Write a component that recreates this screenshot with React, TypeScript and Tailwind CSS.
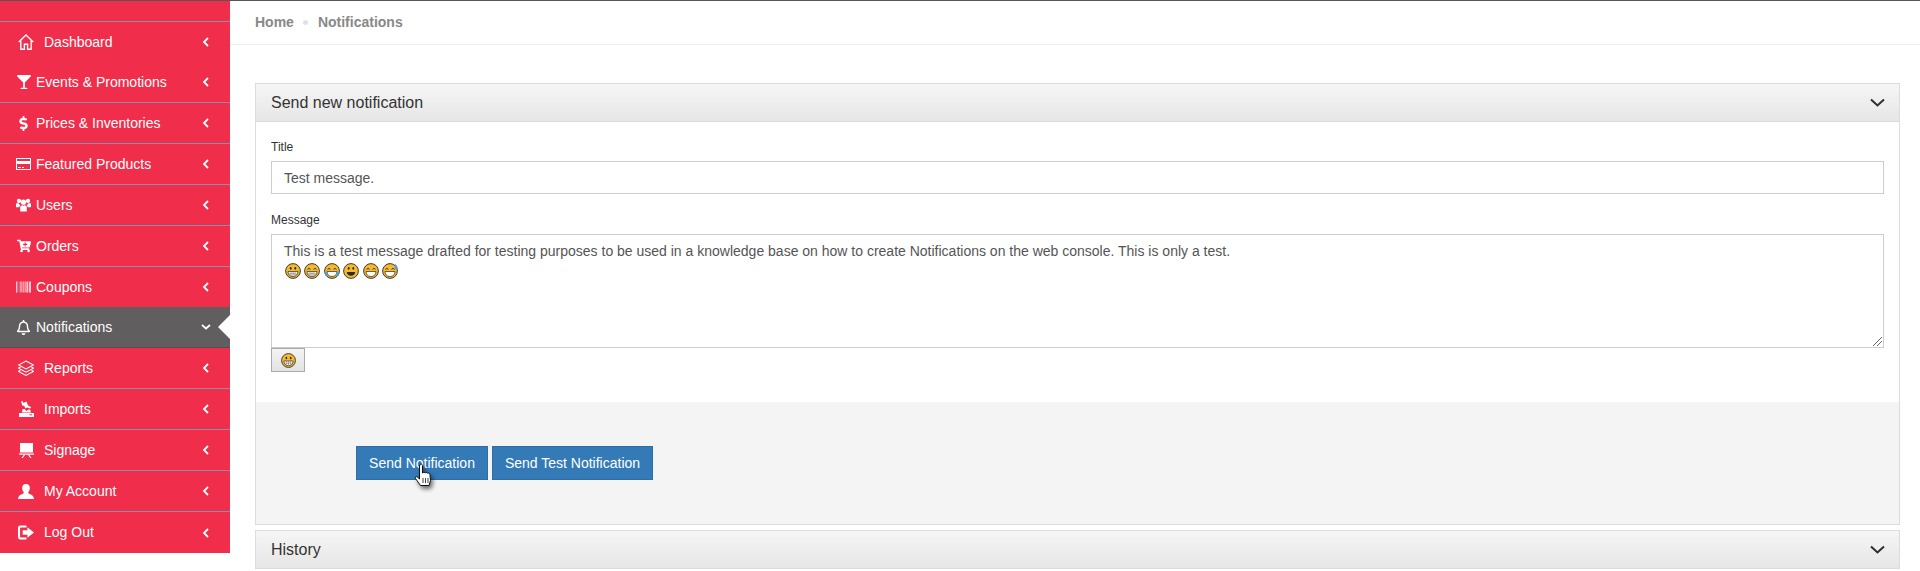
import type { ReactNode } from "react";
import { FaGlassMartini, FaDollarSign, FaCartPlus, FaBarcode, FaRegBell } from "react-icons/fa";

const HomeIcon = () => (
  <svg width="16" height="16" viewBox="0 0 16 16" fill="none" stroke="currentColor" strokeWidth="1.400">
    <path d="M.8 8 8 1l7.200 7" />
    <path d="M2.800 6.500v8.700h3.600v-5h3.200v5h3.600V6.500" />
  </svg>
);

const CardIcon = () => (
  <svg width="15" height="13" viewBox="0 0 15 13" fill="none">
    <rect x=".5" y=".5" width="14" height="11" stroke="currentColor" />
    <rect x="1" y="3" width="13" height="3" fill="currentColor" />
    <path d="M2 9.500h3M6 9.500h2" stroke="currentColor" />
  </svg>
);

const UsersIcon = () => (
  <svg width="16" height="14" viewBox="0 0 16 14" fill="currentColor">
    <circle cx="3.200" cy="2.600" r="2.300" />
    <circle cx="12.800" cy="2.600" r="2.300" />
    <circle cx="8" cy="4" r="2.800" />
    <path d="M0 5.500c.8-.6 2-.6 3-.3.300 1 1 1.800 1.700 2.300C4 8 3.500 8.700 3.500 9.500H0zM16 5.500c-.8-.6-2-.6-3-.3-.3 1-1 1.800-1.700 2.300.7.500 1.200 1.200 1.200 2H16z" />
    <path d="M4.500 9c.5-1 1.300-1.600 2-1.700.9.500 2.100.5 3 0 .7.100 1.500.7 2 1.700v5h-7z" />
  </svg>
);

const LayersIcon = () => (
  <svg width="16" height="16" viewBox="0 0 16 16" fill="none" stroke="currentColor" strokeWidth="1.100">
    <path d="M8 1 15.500 5 8 9 .5 5z" />
    <path d="M2.500 7 .5 8.200 8 12.200l7.500-4L13.500 7" />
    <path d="M2.500 10.300.5 11.400 8 15.400l7.500-4-2-1.100" />
  </svg>
);

const GavelIcon = () => (
  <svg width="15" height="16" viewBox="0 0 15 16" fill="currentColor">
    <path d="M2 .5 3.500 0l1 2 3-1.500L9 4.500l3 1.500-.5 1.500-3.500-1-1.500 1-1.500-3-1.500.5z" />
    <path d="M3.500 8h2l2 2 2-1.500h1.500l1 3H3z" />
    <path d="M0 12h15v4H0z" />
    <rect x="10.500" y="13.300" width="2.500" height="1" fill="#f02d4a" />
  </svg>
);

const SignageIcon = () => (
  <svg width="15" height="15" viewBox="0 0 15 15" fill="currentColor">
    <rect x="1" y="0" width="13" height="9.500" />
    <rect x="0" y="10.500" width="15" height="1.200" />
    <path d="M5 11.500h1.300L3.800 15H2.500zM10 11.500H8.700L11.200 15h1.300z" />
  </svg>
);

const AccountIcon = () => (
  <svg width="16" height="15" viewBox="0 0 16 15" fill="currentColor">
    <ellipse cx="8" cy="4.200" rx="3.800" ry="4.200" />
    <path d="M5.800 7.500c.3 1.200-.3 2.200-1.800 2.800C2 11 .3 11.800 0 15h16c-.3-3.200-2-4-4-4.700-1.500-.6-2.100-1.600-1.800-2.800z" />
  </svg>
);

const LogOutIcon = () => (
  <svg width="17" height="15" viewBox="0 0 17 15" fill="currentColor">
    <path d="M2.500 0H9v2.200H3a.8.8 0 0 0-.8.8v9c0 .4.400.8.800.8h6V15H2.500A2.500 2.500 0 0 1 0 12.500v-10A2.500 2.500 0 0 1 2.500 0z" />
    <path d="M5 5h5V1.800l7 5.700-7 5.700V10H5z" />
  </svg>
);

const Chevron = ({ open }: { open?: boolean }) => (
  <svg width="10" height="10" viewBox="0 0 10 10" fill="none" stroke="currentColor" strokeWidth="1.800">
    <path d={open ? "M1 3l4 3.500L9 3" : "M7 1 3 5l4 4"} />
  </svg>
);

const PanelChevron = () => (
  <svg width="15" height="10" viewBox="0 0 15 10" fill="none" stroke="#2d2d33" strokeWidth="2">
    <path d="M1 1.500 7.500 7.500 14 1.500" />
  </svg>
);

type Face = "grin" | "beam" | "joy" | "smile" | "laugh" | "sweat";

const Emoji = ({ face, size = 16 }: { face: Face; size?: number }) => (
  <svg width={size} height={size} viewBox="0 0 16 16" className="shrink-0">
    <circle cx="8" cy="8" r="7.400" fill="#f6b82c" stroke="#2b2b2b" strokeWidth=".9" />
    {face === "beam" || face === "laugh" || face === "joy" || face === "sweat" ? (
      <path d="M3.500 6.300q1.500-1.800 3 0M9.500 6.300q1.500-1.800 3 0" fill="none" stroke="#2b2b2b" strokeWidth=".9" />
    ) : (
      <>
        <ellipse cx="5.700" cy="5.300" rx=".9" ry="1.400" fill="#2b2b2b" />
        <ellipse cx="10.300" cy="5.300" rx=".9" ry="1.400" fill="#2b2b2b" />
      </>
    )}
    {face === "smile" ? (
      <path d="M3.800 9h8.400q-.5 3.800-4.200 3.800T3.800 9z" fill="#2b2b2b" />
    ) : (
      <path d="M3 8.500h10q-.3 5-5 5t-5-5z" fill="#fff" stroke="#2b2b2b" strokeWidth=".7" />
    )}
    {(face === "grin" || face === "beam") && (
      <path d="M3.500 10.800h9M6 8.700v4.400M8 8.700v4.600M10 8.700v4.400" stroke="#555" strokeWidth=".5" />
    )}
    {face === "joy" && <path d="M.8 9.500 3.500 8.500 3.800 12.500 1.500 12.500zM15.200 9.500 12.500 8.500 12.200 12.500 14.500 12.500z" fill="#3aa7e0" />}
    {face === "sweat" && <path d="M13.300.6 15.600 4.200a1.500 1.500 0 1 1-2.800.2z" fill="#3aa7e0" />}
  </svg>
);

type Item = { label: string; icon: ReactNode; wide?: boolean; h: string; active?: boolean };

const items: Item[] = [
  { label: "Dashboard", icon: <HomeIcon />, wide: true, h: "h-[40px]" },
  { label: "Events & Promotions", icon: <FaGlassMartini size={14} />, h: "h-[41px] border-b border-[#8c8fa3]" },
  { label: "Prices & Inventories", icon: <FaDollarSign size={15} />, h: "h-[41px] border-b border-[#8c8fa3]" },
  { label: "Featured Products", icon: <CardIcon />, h: "h-[41px] border-b border-[#8c8fa3]" },
  { label: "Users", icon: <UsersIcon />, h: "h-[41px] border-b border-[#8c8fa3]" },
  { label: "Orders", icon: <FaCartPlus size={14} />, h: "h-[41px] border-b border-[#8c8fa3]" },
  { label: "Coupons", icon: <FaBarcode size={16} />, h: "h-[40px]" },
  { label: "Notifications", icon: <FaRegBell size={15} />, h: "h-[41px] border-b border-[#504e52]", active: true },
  { label: "Reports", icon: <LayersIcon />, wide: true, h: "h-[41px] border-b border-[#8c8fa3]" },
  { label: "Imports", icon: <GavelIcon />, wide: true, h: "h-[41px] border-b border-[#8c8fa3]" },
  { label: "Signage", icon: <SignageIcon />, wide: true, h: "h-[41px] border-b border-[#8c8fa3]" },
  { label: "My Account", icon: <AccountIcon />, wide: true, h: "h-[41px] border-b border-[#8c8fa3]" },
  { label: "Log Out", icon: <LogOutIcon />, wide: true, h: "h-[41px]" },
];

const SideItem = ({ item }: { item: Item }) => (
  <div className={`relative flex items-center pl-[16px] pr-[19px] text-[14px] text-white ${item.h} ${item.active ? "bg-[#605e5e]" : ""}`}>
    <span className={item.wide ? "ml-[2px] mr-[10px] flex w-[16px] justify-center" : "mr-[5px] flex w-[15px] justify-center"}>{item.icon}</span>
    <span className="flex-1">{item.label}</span>
    <Chevron open={item.active} />
    {item.active && (
      <span className="absolute right-0 top-[8px] h-0 w-0 border-y-[12px] border-r-[12px] border-y-transparent border-r-white" />
    )}
  </div>
);

const PanelHeader = ({ title, bordered }: { title: string; bordered?: boolean }) => (
  <div className={`flex items-center justify-between bg-gradient-to-b from-[#f6f6f6] to-[#e6e6e6] pl-[15px] pr-[14px] text-[16px] text-[#333] ${bordered ? "h-[38px] border-b border-[#dcdcdc]" : "h-[37px]"}`}>
    <span>{title}</span>
    <PanelChevron />
  </div>
);

const HandCursor = () => (
  <svg width="28" height="30" viewBox="0 0 28 30" className="absolute left-[58px] top-[17px] drop-shadow-[2px_3px_2px_rgba(0,0,0,0.55)]">
    <path
      d="M6 1.500c1-.8 2.400-.2 2.500 1V10c.6-.8 2-.8 2.500 0 .6-.7 2-.7 2.500.3.700-.5 2-.3 2.400.7l.6 6.500-1.500 5H6.500L1.500 15.500c-.7-1.200.7-2.300 1.800-1.500L5.500 16V3z"
      fill="#fff"
      stroke="#111"
      strokeWidth="1"
    />
    <path d="M9 15v5M11.500 15v5M14 15v5" stroke="#111" strokeWidth=".8" />
  </svg>
);

export default function App() {
  return (
    <div className="flex h-[571px] overflow-hidden border-t border-[#555] bg-white font-['Liberation_Sans',Arial,sans-serif]">
      <aside className="w-[230px] shrink-0 self-start bg-[#f02d4a]">
        <div className="h-[21px] border-b border-[#8c8fa3]" />
        {items.map((item) => (
          <SideItem key={item.label} item={item} />
        ))}
      </aside>

      <main className="flex-1">
        <div className="flex h-[44px] items-center gap-[9px] border-b border-[#eceef1] pl-[25px] text-[14px] font-bold text-[#888]">
          <span>Home</span>
          <span className="h-[5px] w-[5px] rounded-full bg-[#dfe1e4]" />
          <span className="ml-[1px]">Notifications</span>
        </div>

        <div className="ml-[25px] mr-[20px] mt-[38px]">
          <section className="border border-[#dcdcdc]">
            <PanelHeader title="Send new notification" bordered />
            <div className="px-[15px] pt-[15px]">
              <label className="block h-[24px] pt-[2px] text-[12px] leading-[16px] text-[#333]">Title</label>
              <input
                readOnly
                value="Test message."
                className="block h-[33px] w-full border border-[#ccc] px-[12px] text-[14px] text-[#555] outline-none"
              />
              <label className="mt-[17px] block h-[23px] pt-[1px] text-[12px] leading-[16px] text-[#333]">Message</label>
              <div className="relative h-[114px] border border-[#ccc] px-[12px] py-[6px] text-[14px] leading-[20px] text-[#555]">
                <div>This is a test message drafted for testing purposes to be used in a knowledge base on how to create Notifications on the web console. This is only a test.</div>
                <div className="flex gap-[3.400px] pl-[1px] pt-[2px]">
                  {(["grin", "beam", "joy", "smile", "laugh", "sweat"] as Face[]).map((f) => (
                    <Emoji key={f} face={f} />
                  ))}
                </div>
                <svg width="9" height="9" viewBox="0 0 9 9" className="absolute bottom-[1px] right-[1px]" stroke="#666" strokeWidth="1">
                  <path d="M0 9 9 0M4 9l5-5" />
                </svg>
              </div>
              <button className="flex h-[24px] w-[34px] items-center justify-center border border-[#aaa] bg-gradient-to-b from-[#f4f4f4] to-[#e2e2e2]">
                <Emoji face="grin" size={15} />
              </button>
            </div>
            <div className="mt-[30px] flex h-[122px] gap-[4px] bg-[#f4f4f4] pl-[100px] pt-[44px]">
              <div className="relative">
                <button className="h-[34px] w-[132px] border border-[#2e6da4] bg-[#337ab7] text-[14px] text-white">Send Notification</button>
                <HandCursor />
              </div>
              <button className="h-[34px] w-[161px] border border-[#2e6da4] bg-[#337ab7] text-[14px] text-white">Send Test Notification</button>
            </div>
          </section>

          <section className="mt-[5px] border border-[#dcdcdc]">
            <PanelHeader title="History" />
          </section>
        </div>
      </main>
    </div>
  );
}
